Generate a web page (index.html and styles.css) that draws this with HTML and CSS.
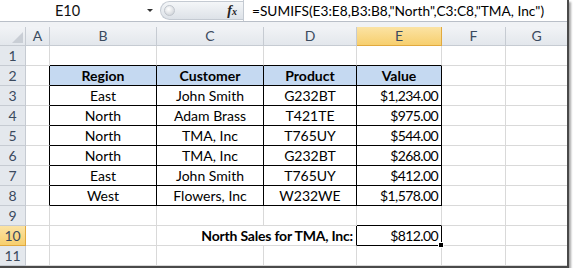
FILE: index.html
```html
<!DOCTYPE html>
<html>
<head>
<meta charset="utf-8">
<link rel="stylesheet" href="styles.css">
</head>
<body>
<div class="window">
  <div class="fbar">
    <div class="namebox"><span class="ref">E10</span><span class="dd"></span></div>
    <div class="pill"><span class="knob"></span><span class="fx">f<span class="fxs">x</span></span></div>
    <div class="formula">=SUMIFS(E3:E8,B3:B8,"North",C3:C8,"TMA, Inc")</div>
  </div>
  <div class="gap"></div>
  <table class="sheet">
    <colgroup>
      <col class="w-h"><col class="w-a"><col class="w-b"><col class="w-c"><col class="w-d"><col class="w-e"><col class="w-f"><col class="w-g">
    </colgroup>
    <tr class="hrow">
      <th class="corner"><span class="tri"></span></th><th>A</th><th>B</th><th>C</th><th>D</th><th class="sel">E</th><th>F</th><th>G</th>
    </tr>
    <tr>
      <th class="rh">1</th><td></td><td class="tb"></td><td class="tb"></td><td class="tb"></td><td class="tb"></td><td></td><td class="last"></td>
    </tr>
    <tr>
      <th class="rh">2</th><td class="lb"></td><td class="hd">Region</td><td class="hd">Customer</td><td class="hd">Product</td><td class="hd">Value</td><td></td><td class="last"></td>
    </tr>
    <tr>
      <th class="rh">3</th><td class="lb"></td><td class="dc">East</td><td class="dc">John Smith</td><td class="dc">G232BT</td><td class="dc num">$1,234.00</td><td></td><td class="last"></td>
    </tr>
    <tr>
      <th class="rh">4</th><td class="lb"></td><td class="dc">North</td><td class="dc">Adam Brass</td><td class="dc">T421TE</td><td class="dc num">$975.00</td><td></td><td class="last"></td>
    </tr>
    <tr>
      <th class="rh">5</th><td class="lb"></td><td class="dc">North</td><td class="dc">TMA, Inc</td><td class="dc">T765UY</td><td class="dc num">$544.00</td><td></td><td class="last"></td>
    </tr>
    <tr>
      <th class="rh">6</th><td class="lb"></td><td class="dc">North</td><td class="dc">TMA, Inc</td><td class="dc">G232BT</td><td class="dc num">$268.00</td><td></td><td class="last"></td>
    </tr>
    <tr>
      <th class="rh">7</th><td class="lb"></td><td class="dc">East</td><td class="dc">John Smith</td><td class="dc">T765UY</td><td class="dc num">$412.00</td><td></td><td class="last"></td>
    </tr>
    <tr>
      <th class="rh">8</th><td class="lb"></td><td class="dc">West</td><td class="dc">Flowers, Inc</td><td class="dc">W232WE</td><td class="dc num">$1,578.00</td><td></td><td class="last"></td>
    </tr>
    <tr>
      <th class="rh">9</th><td></td><td></td><td></td><td></td><td class="above-active"></td><td></td><td class="last"></td>
    </tr>
    <tr>
      <th class="rh sel">10</th><td></td><td></td><td colspan="2" class="label-cell"><div class="label">North Sales for TMA, Inc:</div></td><td class="active num"><div class="active-in">$812.00<span class="handle"></span></div></td><td></td><td class="last"></td>
    </tr>
    <tr>
      <th class="rh">11</th><td></td><td></td><td></td><td></td><td></td><td></td><td class="last"></td>
    </tr>
  </table>
</div>
</body>
</html>
```

FILE: styles.css
```css
html, body {
  margin: 0;
  padding: 0;
  background: #ffffff;
}
.window {
  width: 567px;
  border-right: 2px solid #4a4a4a;
  border-bottom: 2px solid #4a4a4a;
  box-shadow: 2px 2px 2px rgba(0, 0, 0, 0.35);
  background: #ffffff;
  font-family: "Lato", "Liberation Sans", sans-serif;
}
.fbar {
  display: flex;
  height: 21px;
  border-bottom: 1px solid #b9bfc8;
  background: #ffffff;
}
.namebox {
  width: 158px;
  display: flex;
  align-items: center;
  position: relative;
}
.ref {
  flex: 1;
  text-align: center;
  font-size: 14.5px;
  color: #111;
  padding-right: 12px;
}
.dd {
  width: 0;
  height: 0;
  border-left: 3px solid transparent;
  border-right: 3px solid transparent;
  border-top: 3px solid #333;
  margin-right: 5px;
}
.pill {
  width: 83px;
  margin: 1px 0 0 2px;
  height: 19px;
  border-radius: 10px 0 0 10px;
  background: linear-gradient(#f4f6f8, #dde2e8);
  border: 1px solid #c4cad2;
  border-right: none;
  box-sizing: border-box;
  display: flex;
  align-items: center;
  justify-content: space-between;
  padding: 0 6px 0 3px;
}
.knob {
  width: 9px;
  height: 9px;
  border-radius: 50%;
  background: radial-gradient(circle at 40% 35%, #ffffff, #c7ccd2);
  border: 1px solid #c0c5cc;
}
.fx {
  font-family: "Liberation Serif", serif;
  font-style: italic;
  font-weight: bold;
  font-size: 14px;
  color: #222;
}
.fxs {
  font-size: 10px;
}
.formula {
  flex: 1;
  border-left: 1px solid #c4cad2;
  font-size: 13.7px;
  line-height: 21px;
  padding-left: 8px;
  color: #000;
  white-space: nowrap;
}
.gap {
  height: 5px;
  background: #f0f2f5;
}
.sheet {
  border-collapse: separate;
  border-spacing: 0;
  table-layout: fixed;
  width: 567px;
}
.w-h { width: 26px; }
.w-a { width: 24px; }
.w-b { width: 107px; }
.w-c { width: 107px; }
.w-d { width: 93px; }
.w-e { width: 85px; }
.w-f { width: 64px; }
.w-g { width: 61px; }
.sheet td, .sheet th {
  padding: 0;
  height: 19px;
  border-right: 1px solid #d9d9d9;
  border-bottom: 1px solid #d9d9d9;
  font-size: 14px;
  font-weight: normal;
  white-space: nowrap;
  overflow: hidden;
  box-sizing: content-box;
  vertical-align: bottom;
  line-height: 18px;
}
.sheet td.last { border-right: none; }
.hrow th {
  height: 18px;
  background: linear-gradient(#f1f3f6, #e3e7ec);
  border-right: 1px solid #c6cbd2;
  border-bottom: 1px solid #c6cbd2;
  color: #3b4a5e;
  font-size: 14px;
  text-align: center;
  vertical-align: middle;
}
.hrow th:last-child { border-right: none; }
.sheet th.rh {
  background: #e4e8ed;
  border-right: 1px solid #c6cbd2;
  border-bottom: 1px solid #c6cbd2;
  color: #3b4a5e;
  font-size: 14px;
  text-align: center;
}
.sheet th.sel {
  background: linear-gradient(#fbe3a4, #f7cf6e);
  border-color: #e1a93e;
}
.corner {
  position: relative;
}
.tri {
  position: absolute;
  right: 2px;
  bottom: 2px;
  width: 0;
  height: 0;
  border-left: 11px solid transparent;
  border-bottom: 11px solid #c9ced5;
}
.sheet td.tb { border-bottom-color: #000; }
.sheet td.lb { border-right-color: #000; }
.sheet td.hd {
  background: #c5d9f1;
  border-right-color: #000;
  border-bottom-color: #000;
  font-weight: bold;
  text-align: center;
  color: #000;
}
.sheet td.dc {
  border-right-color: #000;
  border-bottom-color: #000;
  text-align: center;
  color: #000;
}
.sheet td.num {
  text-align: right;
  padding-right: 3px;
  width: 82px;
  letter-spacing: -0.6px;
}
.sheet td.above-active { border-bottom-color: #000; }
.sheet td.label-cell {
  border-right-color: #000;
  overflow: visible;
}
.label {
  display: flex;
  justify-content: flex-end;
  font-weight: bold;
  padding-right: 3px;
  letter-spacing: -0.2px;
}
.sheet td.active {
  border-bottom-color: #000;
  border-right-color: #000;
  overflow: visible;
}
.active-in {
  position: relative;
}
.handle {
  position: absolute;
  right: -6px;
  bottom: -3px;
  width: 4px;
  height: 4px;
  background: #000;
  border: 1px solid #fff;
}
```
